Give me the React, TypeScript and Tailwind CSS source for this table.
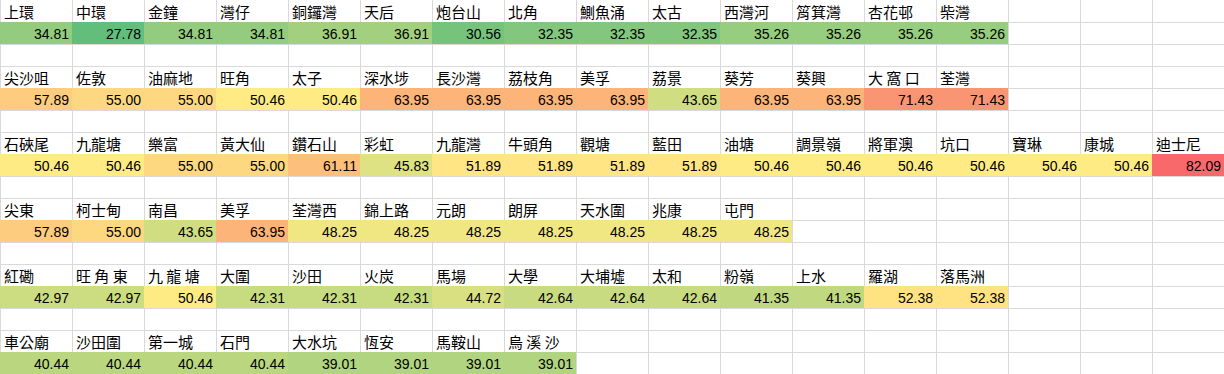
import React from "react";

type Group = { names: string[]; values: number[] };

const groups: Group[] = [
  {
    names: ["上環", "中環", "金鐘", "灣仔", "銅鑼灣", "天后", "炮台山", "北角", "鰂魚涌", "太古", "西灣河", "筲箕灣", "杏花邨", "柴灣"],
    values: [34.81, 27.78, 34.81, 34.81, 36.91, 36.91, 30.56, 32.35, 32.35, 32.35, 35.26, 35.26, 35.26, 35.26],
  },
  {
    names: ["尖沙咀", "佐敦", "油麻地", "旺角", "太子", "深水埗", "長沙灣", "荔枝角", "美孚", "荔景", "葵芳", "葵興", "大 窩 口", "荃灣"],
    values: [57.89, 55.0, 55.0, 50.46, 50.46, 63.95, 63.95, 63.95, 63.95, 43.65, 63.95, 63.95, 71.43, 71.43],
  },
  {
    names: ["石硤尾", "九龍塘", "樂富", "黃大仙", "鑽石山", "彩虹", "九龍灣", "牛頭角", "觀塘", "藍田", "油塘", "調景嶺", "將軍澳", "坑口", "寶琳", "康城", "迪士尼"],
    values: [50.46, 50.46, 55.0, 55.0, 61.11, 45.83, 51.89, 51.89, 51.89, 51.89, 50.46, 50.46, 50.46, 50.46, 50.46, 50.46, 82.09],
  },
  {
    names: ["尖東", "柯士甸", "南昌", "美孚", "荃灣西", "錦上路", "元朗", "朗屏", "天水圍", "兆康", "屯門"],
    values: [57.89, 55.0, 43.65, 63.95, 48.25, 48.25, 48.25, 48.25, 48.25, 48.25, 48.25],
  },
  {
    names: ["紅磡", "旺 角 東", "九 龍 塘", "大圍", "沙田", "火炭", "馬場", "大學", "大埔墟", "太和", "粉嶺", "上水", "羅湖", "落馬洲"],
    values: [42.97, 42.97, 50.46, 42.31, 42.31, 42.31, 44.72, 42.64, 42.64, 42.64, 41.35, 41.35, 52.38, 52.38],
  },
  {
    names: ["車公廟", "沙田圍", "第一城", "石門", "大水坑", "恆安", "馬鞍山", "烏 溪 沙"],
    values: [40.44, 40.44, 40.44, 40.44, 39.01, 39.01, 39.01, 39.01],
  },
];

const COLS = 17;
const MIN = 27.78;
const MID = 50.46;
const MAX = 82.09;

const lerp = (a: number[], b: number[], t: number) =>
  a.map((x, i) => Math.round(x + (b[i] - x) * t));

function scaleColor(v: number): string {
  const green = [0x63, 0xbe, 0x7b];
  const yellow = [0xff, 0xeb, 0x84];
  const red = [0xf8, 0x69, 0x6b];
  let c: number[];
  if (v <= MID) {
    const t = Math.max(0, (v - MIN) / (MID - MIN));
    c = lerp(green, yellow, t);
  } else {
    const t = Math.min(1, (v - MID) / (MAX - MID));
    c = lerp(yellow, red, t);
  }
  return `rgb(${c[0]}, ${c[1]}, ${c[2]})`;
}

type Cell =
  | { kind: "blank" }
  | { kind: "name"; text: string }
  | { kind: "value"; value: number };

function buildRows(): Cell[][] {
  const rows: Cell[][] = [];
  groups.forEach((g, gi) => {
    const nameRow: Cell[] = [];
    const valueRow: Cell[] = [];
    for (let c = 0; c < COLS; c++) {
      nameRow.push(c < g.names.length ? { kind: "name", text: g.names[c] } : { kind: "blank" });
      valueRow.push(c < g.values.length ? { kind: "value", value: g.values[c] } : { kind: "blank" });
    }
    rows.push(nameRow, valueRow);
    if (gi < groups.length - 1) {
      rows.push(Array.from({ length: COLS }, () => ({ kind: "blank" } as Cell)));
    }
  });
  return rows;
}

export default function App() {
  const rows = buildRows();
  return (
    <div className="w-[1224px] h-[374px] overflow-hidden bg-white">
      <div className="grid grid-cols-[repeat(17,72px)] auto-rows-[22px] font-['Liberation_Sans','Noto_Sans_CJK_TC',sans-serif] text-black">
        {rows.map((row, r) =>
          row.map((cell, c) => {
            const top = r === 0 ? "" : "border-t";
            if (cell.kind === "value") {
              return (
                <div
                  key={`${r}-${c}`}
                  className="flex items-end justify-end pr-[3px] pb-[2px] text-[14px] leading-[16px]"
                  style={{ backgroundColor: scaleColor(cell.value) }}
                >
                  {cell.value.toFixed(2)}
                </div>
              );
            }
            if (cell.kind === "name") {
              return (
                <div
                  key={`${r}-${c}`}
                  className={`flex items-end border-l border-[#d9d9d9] ${top} pl-[3px] pb-[1px] whitespace-pre text-[15px] leading-[18px] font-['Noto_Sans_CJK_TC',sans-serif] overflow-visible`}
                >
                  {cell.text}
                </div>
              );
            }
            return <div key={`${r}-${c}`} className={`border-l border-[#d9d9d9] ${top}`} />;
          })
        )}
      </div>
    </div>
  );
}
